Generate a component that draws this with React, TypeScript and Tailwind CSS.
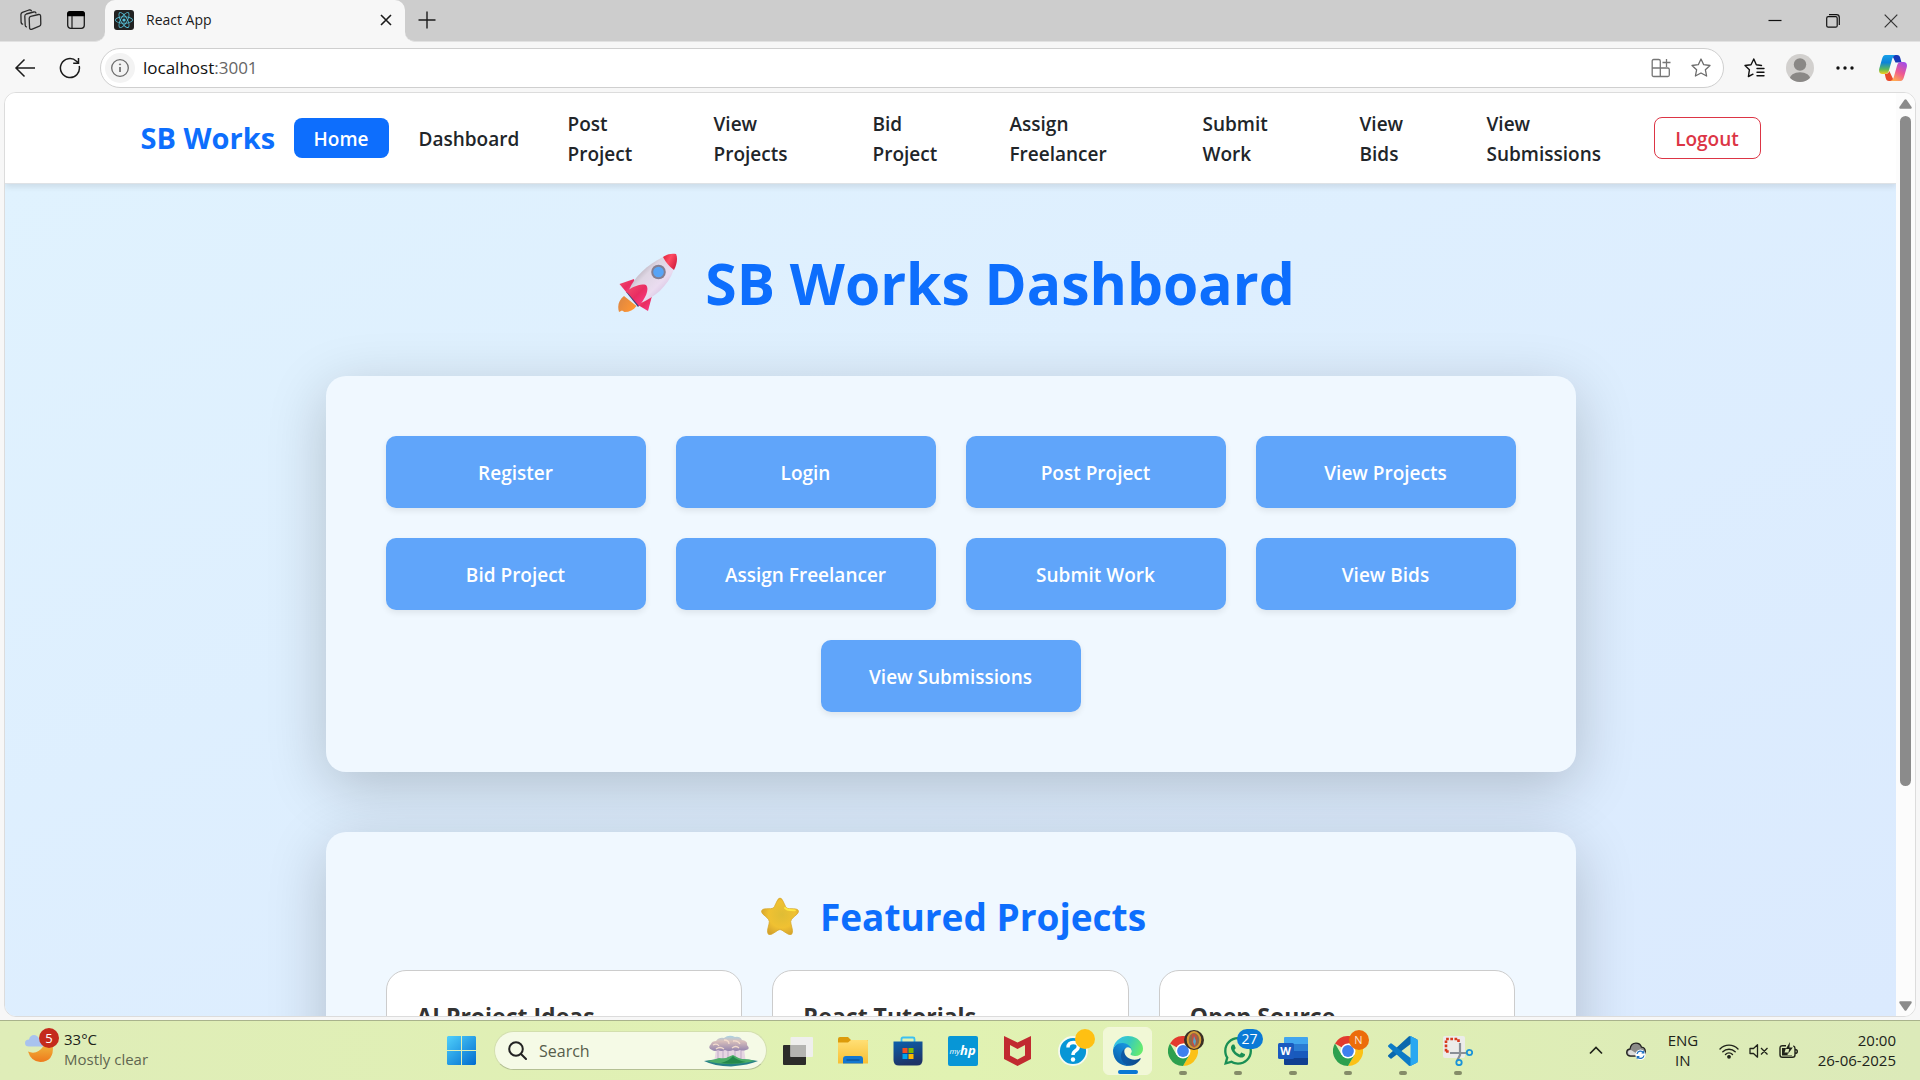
import React from "react";
import type { ReactNode } from "react";
import { FaReact, FaWhatsapp } from "react-icons/fa";

const navItems = [
  { lines: ["Post", "Project"], width: "w-[136px]" },
  { lines: ["View", "Projects"], width: "w-[149px]" },
  { lines: ["Bid", "Project"], width: "w-[127px]" },
  { lines: ["Assign", "Freelancer"], width: "w-[183px]" },
  { lines: ["Submit", "Work"], width: "w-[147px]" },
  { lines: ["View", "Bids"], width: "w-[117px]" },
  { lines: ["View", "Submissions"], width: "w-[167px]" },
];

const actions = [
  "Register",
  "Login",
  "Post Project",
  "View Projects",
  "Bid Project",
  "Assign Freelancer",
  "Submit Work",
  "View Bids",
  "View Submissions",
];

const featured = ["AI Project Ideas", "React Tutorials", "Open Source"];

/* ---------- Browser chrome ---------- */

function WorkspacesIcon() {
  return (
    <svg width="22" height="22" viewBox="0 0 22 22" fill="none" stroke="#2b2b2b" strokeWidth="1.3" strokeLinejoin="round" strokeLinecap="round">
      <path d="M10.7 7.3 18.6 5.5Q20.3 5.2 20.6 6.8L20.8 15Q20.8 16.6 19.4 17.2L11.6 20.3Q10 20.8 9.6 19.2L9.2 9.6Q9.2 7.8 10.7 7.3Z" />
      <path d="M6.4 17.8Q5.3 17.6 5.2 16.2L4.8 7.2Q4.8 5.5 6.3 5L13.6 3Q15.4 2.7 16 4" />
      <path d="M2.6 15.2Q1.2 15 1.1 13.4L.9 5.6Q1 4 2.4 3.4L9 1Q10.7.6 11.4 1.8" />
    </svg>
  );
}

function VerticalTabsIcon() {
  return (
    <svg width="20" height="20" viewBox="0 0 20 20" fill="none">
      <rect x="1.7" y="1.7" width="16.6" height="16.6" rx="3" stroke="#1b1b1b" strokeWidth="1.3" />
      <path d="M1 6.2V4a3 3 0 0 1 3-3h12a3 3 0 0 1 3 3v2.2z" fill="#000" />
      <path d="M6 6v12" stroke="#1b1b1b" strokeWidth="1.2" />
    </svg>
  );
}

function CopilotIcon() {
  return (
    <svg width="28" height="26" viewBox="0 0 28 26">
      <defs>
        <linearGradient id="cpA" x1="0" y1="0" x2="0" y2="1">
          <stop offset="0" stopColor="#18a0e8" />
          <stop offset=".4" stopColor="#0c83d8" />
          <stop offset=".75" stopColor="#5cb85a" />
          <stop offset="1" stopColor="#f5cf1c" />
        </linearGradient>
        <linearGradient id="cpB" x1=".8" y1="0" x2=".3" y2="1">
          <stop offset="0" stopColor="#a24be8" />
          <stop offset=".55" stopColor="#ef5a90" />
          <stop offset="1" stopColor="#ffab52" />
        </linearGradient>
      </defs>
      <path d="M13 0h5c2 0 2.800 1 3.300 3l1.200 4.500h-6z" fill="#1838b8" />
      <path d="M6.500 0h10C14 1 13.500 3 12.900 5L9.800 16c-.8 2.300-2 3-4 3H3.500C.6 19-.5 17 .3 13.500L3 4C3.800 1.200 4.700 0 6.500 0z" fill="url(#cpA)" />
      <path d="M15 26h-5c-2 0-2.800-1-3.300-3L5.800 19c3 0 4-1 4.500-3z" fill="#e84a2c" />
      <path d="M21.500 26h-10c2.500-1 3-3 3.600-5l3.100-11c.8-2.300 2-3 4-3h2.300c2.900 0 4 2 3.200 5.500L25 22c-.8 2.800-1.700 4-3.500 4z" fill="url(#cpB)" />
    </svg>
  );
}

function TabStrip() {
  return (
    <div className="flex h-[42px] shrink-0 items-stretch bg-[#f7f7f7]">
      <div className="flex w-[105px] items-center gap-6 rounded-br-[10px] border-b border-[#e2e2e2] bg-[#cdcdcd] pl-[20px] pb-[2px]">
        <button aria-label="Workspaces"><WorkspacesIcon /></button>
        <button aria-label="Tab actions"><VerticalTabsIcon /></button>
      </div>
      <div className="bg-[#cdcdcd]">
        <div className="flex h-full w-[300px] items-center rounded-t-[10px] bg-[#f7f7f7] pl-[9px] pr-[12px] pb-[2px]">
          <span className="grid size-5 place-items-center rounded-[3px] bg-[#222]">
            <FaReact size={18} color="#58c4dc" />
          </span>
          <span className="ml-3 flex-1 text-[14px] leading-5 text-[#1b1b1b]">React App</span>
          <button aria-label="Close tab">
            <svg width="14" height="14" viewBox="0 0 14 14" stroke="#1b1b1b" strokeWidth="1.600"><path d="M2 2l10 10M12 2 2 12" /></svg>
          </button>
        </div>
      </div>
      <div className="flex flex-1 items-center rounded-bl-[10px] border-b border-[#e2e2e2] bg-[#cdcdcd] pl-3">
        <button aria-label="New tab" className="pb-[2px]">
          <svg width="20" height="20" viewBox="0 0 20 20" stroke="#1b1b1b" strokeWidth="1.400"><path d="M10 1.500v17M1.500 10h17" /></svg>
        </button>
        <div className="ml-auto flex items-center gap-[44px] pr-[22px]">
          <button aria-label="Minimize">
            <svg width="14" height="14" viewBox="0 0 14 14" stroke="#111" strokeWidth="1.200"><path d="M.5 6.500h13" /></svg>
          </button>
          <button aria-label="Restore">
            <svg width="14" height="14" viewBox="0 0 14 14" fill="none" stroke="#111" strokeWidth="1.200">
              <rect x=".7" y="2.700" width="10.500" height="10.500" rx="1.500" />
              <path d="M3 .7h7.500a2.800 2.800 0 0 1 2.800 2.800V11" />
            </svg>
          </button>
          <button aria-label="Close window">
            <svg width="14" height="14" viewBox="0 0 14 14" stroke="#333" strokeWidth="1.200"><path d="M.7.7l12.600 12.600M13.300.7.7 13.300" /></svg>
          </button>
        </div>
      </div>
    </div>
  );
}

function Toolbar() {
  return (
    <div className="flex h-[50px] shrink-0 items-center bg-[#f7f7f7] pl-[14px] pr-[13px] pt-px">
      <button aria-label="Back">
        <svg width="22" height="20" viewBox="0 0 22 20" fill="none" stroke="#1b1b1b" strokeWidth="1.500"><path d="M10.500 1.500 2 10l8.500 8.500M2 10h19" /></svg>
      </button>
      <button aria-label="Reload" className="ml-[23px]">
        <svg width="22" height="22" viewBox="0 0 22 22" fill="none" stroke="#1b1b1b" strokeWidth="1.500"><path d="M20.200 9A9.500 9.500 0 1 1 17.500 4.200L19.500 6M19.500 1v5.300h-5.300" /></svg>
      </button>
      <div className="ml-[19px] flex h-[40px] flex-1 items-center rounded-full border border-[#cfcfcf] bg-white pl-[4px] pr-[12px]">
        <button aria-label="Site information" className="grid size-[30px] shrink-0 place-items-center rounded-full bg-[#f3f3f3]">
          <svg width="18" height="18" viewBox="0 0 18 18" fill="none" stroke="#6b6b6b" strokeWidth="1.300">
            <circle cx="9" cy="9" r="8.300" />
            <path d="M9 8v5" strokeWidth="1.700" />
            <circle cx="9" cy="5.400" r=".6" fill="#6b6b6b" strokeWidth=".8" />
          </svg>
        </button>
        <button aria-label="Address" className="ml-2 flex-1 text-left text-[17px] leading-6 text-[#111]">
          localhost<span className="text-[#666]">:3001</span>
        </button>
        <button aria-label="Install app">
          <svg width="20" height="20" viewBox="0 0 20 20" fill="none" stroke="#767676" strokeWidth="1.300">
            <path d="M9.300 10H1.200V3q0-1.500 1.500-1.500h5q1.600 0 1.600 1.500v15.500H2.700q-1.500 0-1.500-1.500v-7M9.300 10h7.500q1.500 0 1.500 1.500V17q0 1.500-1.500 1.500H9.300M15.500 1v8M11.500 4.500h8" />
          </svg>
        </button>
        <button aria-label="Add to favourites" className="ml-[20px]">
          <svg width="20" height="20" viewBox="0 0 20 20" fill="none" stroke="#6b6b6b" strokeWidth="1.300" strokeLinejoin="round">
            <path d="M10 1l2.700 5.700 6.300.8-4.600 4.300 1.200 6.200L10 15l-5.600 3 1.200-6.200L1 7.500l6.300-.8z" />
          </svg>
        </button>
      </div>
      <button aria-label="Favourites" className="ml-[20px]">
        <svg width="21" height="20" viewBox="0 0 21 20" fill="none" stroke="#111" strokeWidth="1.400" strokeLinejoin="round" strokeLinecap="round">
          <path d="M12.300 6.700 9.800 1 7 6.700 1 7.500l4.400 4.300L4.400 18.500 9 16.200M12.300 6.700 17.500 7.500M13 10.500h7M13 14.200h7M13 17.800h7" />
        </svg>
      </button>
      <button aria-label="Profile" className="ml-[21px]">
        <svg width="28" height="28" viewBox="0 0 28 28">
          <clipPath id="avatar"><circle cx="14" cy="14" r="14" /></clipPath>
          <g clipPath="url(#avatar)">
            <rect width="28" height="28" fill="#d2d0ce" />
            <circle cx="14" cy="10.500" r="6.200" fill="#8a8886" />
            <ellipse cx="14" cy="25" rx="10.500" ry="6.800" fill="#8a8886" />
          </g>
        </svg>
      </button>
      <button aria-label="Settings and more" className="ml-[22px]">
        <svg width="18" height="4" viewBox="0 0 18 4" fill="#111"><circle cx="2" cy="2" r="1.700" /><circle cx="9" cy="2" r="1.700" /><circle cx="16" cy="2" r="1.700" /></svg>
      </button>
      <button aria-label="Copilot" className="ml-[25px]"><CopilotIcon /></button>
    </div>
  );
}

/* ---------- Web page ---------- */

function Navbar() {
  return (
    <nav className="relative z-10 border-b border-[#dee2e6] bg-white shadow-[0_3px_6px_rgba(0,0,0,0.09)]">
      <div className="mx-auto flex min-h-[90px] w-full max-w-[1650px] items-center px-[15px] text-[19px] leading-[30px] text-[#212529]">
        <a href="#brand" className="w-[134px] shrink-0 whitespace-nowrap text-[29px] leading-[44px] font-bold text-[#0d6efd]">SB Works</a>
        <ul className="ml-[19px] flex items-center gap-[10px] font-semibold">
          <li>
            <a href="#home" aria-current="page" className="block w-[95px] rounded-lg bg-[#0d6efd] pt-[6px] pb-[4px] text-center text-white">Home</a>
          </li>
          <li>
            <a href="#dashboard" className="block w-[139px] px-5 pt-[6px] pb-[4px]">Dashboard</a>
          </li>
          {navItems.map((item) => (
            <li key={item.lines.join(" ")} className={item.width}>
              <a href="#section" className="block pt-[6px] pb-[4px] pl-5">
                {item.lines[0]}
                <br />
                {item.lines[1]}
              </a>
            </li>
          ))}
        </ul>
        <button className="ml-auto h-[42px] w-[107px] shrink-0 rounded-lg border border-[#dc3545] pt-px font-semibold text-[#dc3545]">Logout</button>
      </div>
    </nav>
  );
}

function Rocket() {
  return (
    <svg width="60" height="60" viewBox="0 0 60 60" aria-hidden="true">
      <defs>
        <linearGradient id="rkBody" x1=".15" y1=".2" x2=".75" y2=".8">
          <stop offset="0" stopColor="#a9a0ab" />
          <stop offset=".35" stopColor="#ded6e3" />
          <stop offset=".75" stopColor="#eadcf0" />
          <stop offset="1" stopColor="#d9c4e2" />
        </linearGradient>
        <linearGradient id="rkFin" x1="0" y1="0" x2="1" y2="1">
          <stop offset="0" stopColor="#f5506e" />
          <stop offset=".5" stopColor="#e92d62" />
          <stop offset="1" stopColor="#ff3d8c" />
        </linearGradient>
        <linearGradient id="rkFlame" x1="0" y1="0" x2="1" y2=".5">
          <stop offset="0" stopColor="#d98544" />
          <stop offset="1" stopColor="#ff9633" />
        </linearGradient>
        <linearGradient id="rkNose" x1="0" y1="0" x2="1" y2=".6">
          <stop offset="0" stopColor="#dc2038" />
          <stop offset=".5" stopColor="#ff4a62" />
          <stop offset="1" stopColor="#d42040" />
        </linearGradient>
      </defs>
      <path d="M6 43C1 47-1 52 1 59l3-1.500 2.500 1.500c5 0 9-2 12-6z" fill="url(#rkFlame)" />
      <path d="M8 39 20 54l2.500-2.500L11 37z" fill="#42407c" />
      <path d="M16 26 1.500 31 9 40l8-6z" fill="url(#rkFin)" />
      <path d="M34 43l-4 15-10-6 6-8z" fill="url(#rkFin)" />
      <path d="M45 4C29 12 16 24 11 37l12 13c12-5 27-16 33-34z" fill="url(#rkBody)" />
      <path d="M45 4C49 1 54 0 58 1c2 4 1 10-2 16q-7-5-11-13z" fill="url(#rkNose)" />
      <path d="M8 38c6-3 13-8 20-6 4 4-1 14-7 21z" fill="url(#rkFin)" />
      <circle cx="40.500" cy="19" r="7.300" fill="#847f92" />
      <circle cx="40.500" cy="19" r="5.300" fill="#57a4f6" />
    </svg>
  );
}

function Star() {
  return (
    <svg width="40" height="40" viewBox="0 0 40 40" aria-hidden="true">
      <defs>
        <radialGradient id="starFill" cx=".55" cy=".45" r=".6">
          <stop offset="0" stopColor="#dfbd35" />
          <stop offset=".6" stopColor="#f0c132" />
          <stop offset="1" stopColor="#d3a12d" />
        </radialGradient>
      </defs>
      <path d="M20 2.500q2 0 4 5.200 1.800 4.500 3 5 1.500.7 6.500.6 5 0 5 2.700 0 2-4.200 5-3.600 3-3.600 5 0 2 1.200 6 1.500 6-.9 7-2 .8-6-2.300Q21.500 34 20 34t-5 2.700q-4 3.100-6 2.300-2.400-1-.9-7 1.200-4 1.200-6 0-2-3.600-5-4.200-3-4.200-5 0-2.700 5-2.700 5 .1 6.500-.6 1.200-.5 3-5 2-5.200 4-5.200z" transform="translate(0 -1.500)" fill="url(#starFill)" stroke="#d8a82c" strokeWidth=".8" />
      <path d="M25 11q2 2 5 2l5 .3" fill="none" stroke="#ffe742" strokeWidth="1.800" strokeLinecap="round" />
    </svg>
  );
}

function Page() {
  return (
    <div className="flex min-h-0 min-w-0 flex-1 flex-col overflow-hidden">
      <Navbar />
      <main className="min-h-0 flex-1 overflow-hidden bg-gradient-to-br from-[#e0f2fe] to-[#dbeafe]">
        <h1 className="mt-[58px] flex h-[84px] items-start justify-center gap-[27px] pl-[12px] text-[57px] leading-[82px] font-bold text-[#0d6efd]">
          <span className="flex h-[82px] items-center"><Rocket /></span>
          SB Works Dashboard
        </h1>
        <section className="mx-auto mt-[50px] max-w-[1250px] rounded-[20px] bg-[#f0f8ff] p-[60px] shadow-[0_15px_60px_rgba(0,0,0,0.2)]">
          <div className="flex flex-wrap justify-center gap-[30px]">
            {actions.map((label) => (
              <button key={label} className="h-[72px] w-[260px] rounded-[10px] bg-[#60a5fa] pt-[2px] text-[19px] leading-[30px] font-semibold text-white shadow-[0_3px_6px_rgba(0,0,0,0.08)]">
                {label}
              </button>
            ))}
          </div>
        </section>
        <section className="mx-auto mt-[60px] max-w-[1250px] rounded-[20px] bg-[#f0f8ff] px-[60px] pt-[58px] pb-[60px] shadow-[0_15px_60px_rgba(0,0,0,0.2)]">
          <h2 className="mb-[27px] flex items-center justify-center gap-[20px] pl-[5px] text-[37px] leading-[53px] font-bold text-[#0d6efd]">
            <Star />
            Featured Projects
          </h2>
          <div className="grid grid-cols-3 gap-[30px]">
            {featured.map((title) => (
              <article key={title} className="h-[240px] rounded-[20px] border border-[#ccc] bg-white p-[30px]">
                <h3 className="text-[23px] leading-[30px] font-bold text-[#333]">{title}</h3>
              </article>
            ))}
          </div>
        </section>
      </main>
    </div>
  );
}

function Scrollbar() {
  return (
    <div className="flex w-[19px] shrink-0 flex-col items-center bg-[#fcfcfc] pt-[6px] pb-[5px] pr-px">
      <svg width="13" height="10" viewBox="0 0 13 10" fill="#8b8b8b"><path d="M5.500.8q1-1 2 0L12.600 8q.4 1.600-.8 1.800H1.200Q0 9.600.4 8z" /></svg>
      <div className="mt-[7px] h-[670px] w-[11px] rounded-full bg-[#8b8b8b]" />
      <svg className="mt-auto" width="13" height="10" viewBox="0 0 13 10" fill="#8b8b8b"><path d="M5.500 9.200q1 1 2 0L12.600 2q.4-1.600-.8-1.800H1.200Q0 .4.400 2z" /></svg>
    </div>
  );
}

/* ---------- Taskbar ---------- */

function ChromeLogo() {
  return (
    <svg width="30" height="30" viewBox="0 0 30 30">
      <path d="M15 15 2 7.500A15 15 0 0 1 28 7.500H15z" fill="#e33b2e" />
      <path d="M15 7.500h13A15 15 0 0 1 15 30l6.500-11.200z" fill="#fbc116" />
      <path d="M2 7.500A15 15 0 0 0 15 30l6.500-11.250L15 15 8.500 18.750z" fill="#2da04e" />
      <circle cx="15" cy="15" r="7.500" fill="#fff" />
      <circle cx="15" cy="15" r="5.900" fill="#3f80ee" />
    </svg>
  );
}

function TaskbarButton({ label, children, running, active }: { label: string; children: ReactNode; running?: boolean; active?: boolean }) {
  return (
    <button
      aria-label={label}
      className={
        active
          ? "relative grid h-12 w-[49px] mx-[3px] place-items-center rounded-md border border-[#f2f7da] bg-[#f1f8d6]"
          : "relative grid h-12 w-[49px] mx-[3px] place-items-center"
      }
    >
      {children}
      {running && <span className="absolute bottom-0 left-1/2 h-1 w-2 -translate-x-1/2 rounded-full bg-[#858c68]" />}
      {active && <span className="absolute bottom-0 left-1/2 h-1 w-5 -translate-x-1/2 rounded-full bg-[#0a78d4]" />}
    </button>
  );
}

function SearchBox() {
  return (
    <label className="ml-[18px] mr-[3px] flex h-[39px] w-[273px] items-center rounded-full border border-[#d3dfae] border-b-[#b4c094] bg-[#f5fae6] pl-[13px] pr-[8px]">
      <svg width="19" height="19" viewBox="0 0 19 19" fill="none" stroke="#222" strokeWidth="2"><circle cx="8" cy="8" r="6.800" /><path d="M13 13l5 5" strokeLinecap="round" /></svg>
      <input aria-label="Search" placeholder="Search" className="ml-3 w-[140px] bg-transparent text-[16px] leading-6 outline-none placeholder:text-[#575d4b]" />
      <svg className="ml-auto" width="54" height="32" viewBox="0 0 54 32" aria-hidden="true">
        <defs>
          <linearGradient id="cloudTop" x1="0" y1="0" x2="0" y2="1"><stop offset="0" stopColor="#a8d2e4" /><stop offset=".35" stopColor="#d9c0bb" /><stop offset="1" stopColor="#9384ae" /></linearGradient>
        </defs>
        <path d="M12 14h28l2 14H10z" fill="#e6d6e2" />
        <path d="M14 14v12M19 15v12M24 15v13M31 14v13M37 14v12" stroke="#c6b2cc" strokeWidth="1.200" />
        <path d="M8 15q-5-2-1-6 1-3 5-3 3-4 8-3 5-4 11-1 5-1 7 3 6 1 5 5 4 4-1 5-3 1-6 0-4 2-7 0-4 2-8 0-4 2-7 0-3 2-6 0z" fill="url(#cloudTop)" />
        <path d="M9 10q4-2 6 1m5-6q5 0 5 4m4-3q5-1 7 3M12 14q4-3 8 0m8-1q4-3 7 0" fill="none" stroke="#f3dccd" strokeWidth="1.300" />
        <path d="M0 26q15-3 27-1 14-2 27 1-9 4-27 5.500Q10 31 0 26z" fill="#267f88" />
        <path d="M3 26q7-1 12-3 7 1 9-1l5-2q5 3 9 4 7 0 13 2-12 3-24 3-15 0-24-3z" fill="#4cae68" />
        <path d="M17 28q8-2 12-7 3 4 13 6-12 3-25 1z" fill="#24884c" />
      </svg>
    </label>
  );
}

function TaskbarApps() {
  return (
    <div className="flex items-center">
      <button aria-label="Start">
        <svg width="29" height="29" viewBox="0 0 29 29">
          <defs><linearGradient id="win" gradientUnits="userSpaceOnUse" x1="0" y1="0" x2="26" y2="29"><stop offset="0" stopColor="#50d0fb" /><stop offset="1" stopColor="#0471d1" /></linearGradient></defs>
          <path d="M1 0h13v14H0V1zM15 0h13l1 1v13H15zM0 15h14v14H1l-1-1zM15 15h14v13l-1 1H15z" fill="url(#win)" />
        </svg>
      </button>
      <SearchBox />
      <TaskbarButton label="Task view">
        <svg width="30" height="28" viewBox="0 0 30 28">
          <rect x="0" y="8" width="23" height="20" rx="1" fill="#2c2c2a" />
          <rect x="7.500" y="0" width="22.500" height="20" rx="1" fill="#efefed" />
          <path d="M7.500 8H23v12H7.500z" fill="#b4b4b1" />
        </svg>
      </TaskbarButton>
      <TaskbarButton label="File Explorer">
        <svg width="30" height="27" viewBox="0 0 30 27">
          <defs><linearGradient id="fold" x1="0" y1="0" x2="0" y2="1"><stop offset="0" stopColor="#ffdf75" /><stop offset="1" stopColor="#f8bf33" /></linearGradient></defs>
          <path d="M0 2q0-2 2-2h8l3 3h16q1 0 1 1v6H0z" fill="#dc9b0b" />
          <path d="M0 5.500h10l3-2.500h16q1 0 1 1v22.500H0z" fill="url(#fold)" />
          <path d="M5 26.500V22q0-3 3-3h14q3 0 3 3v4.500z" fill="#1377d0" />
          <path d="M8.500 23h13" stroke="#0a4f96" strokeWidth="1.300" />
        </svg>
      </TaskbarButton>
      <TaskbarButton label="Microsoft Store">
        <svg width="30" height="30" viewBox="0 0 30 30">
          <defs><linearGradient id="bag" x1="0" y1="0" x2=".3" y2="1"><stop offset="0" stopColor="#0c60ac" /><stop offset="1" stopColor="#1e3468" /></linearGradient></defs>
          <path d="M8.500 6V3q0-1.500 1.500-1.500h10q1.500 0 1.500 1.500v3" fill="none" stroke="#3cc0f2" strokeWidth="1.800" />
          <path d="M.5 5.500h29V24q0 5.500-5.500 5.500H6Q.5 29.500.5 24z" fill="url(#bag)" />
          <path d="M9.500 12h5v5h-5z" fill="#f25022" /><path d="M15.500 12h5v5h-5z" fill="#7fba00" /><path d="M9.500 18h5v5h-5z" fill="#00a4ef" /><path d="M15.500 18h5v5h-5z" fill="#ffb900" />
        </svg>
      </TaskbarButton>
      <TaskbarButton label="myHP">
        <span className="flex size-[30px] items-center justify-center rounded-xs bg-[#0796d6] text-[8px] leading-none text-white italic">
          my<b className="text-[13px]">hp</b>
        </span>
      </TaskbarButton>
      <TaskbarButton label="McAfee">
        <svg width="27" height="30" viewBox="0 0 27 30"><path d="M0 0 13.500 6.500 27 0v23L13.500 30 0 23zM6 9v10.500l7.500 4 7.500-4V9l-7.500 4z" fill="#c12a30" fillRule="evenodd" /></svg>
      </TaskbarButton>
      <TaskbarButton label="HP Support">
        <span className="relative">
          <svg width="30" height="30" viewBox="0 0 30 30"><circle cx="15" cy="15" r="14" fill="#0796d6" stroke="#f6faf0" strokeWidth="1.800" /><path d="M10 11.500Q10 6.500 15.300 6.500q5 0 5 4 0 2.500-2.800 4.200Q15 16.300 15 19" fill="none" stroke="#fff" strokeWidth="3.400" /><circle cx="15" cy="23.500" r="2.200" fill="#fff" /></svg>
          <span className="absolute -top-[7px] -right-[7px] size-5 rounded-full bg-[#ffc012]" />
        </span>
      </TaskbarButton>
      <TaskbarButton label="Microsoft Edge" active>
        <svg width="30" height="30" viewBox="0 0 256 256">
          <defs>
            <linearGradient id="eg1" x1=".3" y1=".5" x2="1" y2=".6"><stop offset="0" stopColor="#0c59a4" /><stop offset="1" stopColor="#114a8b" /></linearGradient>
            <linearGradient id="eg2" x1=".8" y1="0" x2=".2" y2="1"><stop offset="0" stopColor="#1b9de2" /><stop offset=".4" stopColor="#1383d0" /><stop offset="1" stopColor="#085aa6" /></linearGradient>
            <linearGradient id="eg3" x1="0" y1=".2" x2="1" y2=".5"><stop offset="0" stopColor="#35c1f1" /><stop offset=".5" stopColor="#36c9c0" /><stop offset="1" stopColor="#66eb6e" /></linearGradient>
          </defs>
          <path fill="url(#eg1)" d="M231 190.500c-3.400 1.800-6.900 3.400-10.500 4.700a101.900 101.900 0 0 1-35.900 6.500c-47.300 0-88.500-32.500-88.500-74.300a31.500 31.500 0 0 1 16.400-27.300c-42.800 1.800-53.800 46.400-53.800 72.500 0 74 68.100 81.400 82.800 81.400 7.900 0 19.800-2.300 27-4.600l1.300-.4a128.300 128.300 0 0 0 66.600-52.800 4 4 0 0 0-5.400-5.700z" />
          <path fill="url(#eg2)" d="M105.700 241.400a79.200 79.200 0 0 1-22.700-21.300 80.700 80.700 0 0 1 29.500-120c3.200-1.500 8.500-4.100 15.600-4a32.400 32.400 0 0 1 25.700 13 31.900 31.900 0 0 1 6.300 18.700c0-.2 24.500-79.600-80-79.600-43.900 0-80 41.700-80 78.200a130.200 130.200 0 0 0 12.100 56 128 128 0 0 0 156.400 67 75.500 75.500 0 0 1-62.800-8z" />
          <path fill="url(#eg3)" d="M152.300 148.900c-.9 1-3.400 2.500-3.400 5.600 0 2.600 1.700 5.200 4.800 7.300 14.300 10 41.400 8.600 41.500 8.600a59.600 59.600 0 0 0 30.300-8.300 61.400 61.400 0 0 0 30.400-52.900c.3-22.400-8-37.300-11.300-43.900C223.500 23.900 177.700 0 128 0A128 128 0 0 0 0 126.200c.5-36.500 36.800-66 80-66 3.500 0 23.500.3 42 10.100a72.600 72.600 0 0 1 30.900 29.300c6.100 10.600 7.200 24.100 7.200 29.500s-2.700 13.300-7.800 19.900z" />
        </svg>
      </TaskbarButton>
      <TaskbarButton label="Chrome" running>
        <span className="relative">
          <ChromeLogo />
          <svg className="absolute -top-[6px] -right-[6px]" width="20" height="20" viewBox="0 0 20 20">
            <circle cx="10" cy="10" r="10" fill="#3a2f26" />
            <ellipse cx="10" cy="10" rx="6.300" ry="8" fill="#8d6a48" stroke="#d59a35" strokeWidth="2" />
            <path d="M8 4q3-1 5 3l-1 8-2 3-2-4z" fill="#c0503f" />
            <path d="M10 6l2 5-1 5-2-4z" fill="#58a5c8" />
          </svg>
        </span>
      </TaskbarButton>
      <TaskbarButton label="WhatsApp" running>
        <span className="relative">
          <FaWhatsapp size={32} color="#1a8f55" />
          <span className="absolute -top-[6px] -right-[9px] h-5 w-[26px] rounded-full bg-[#0b7ad6] text-center text-[14px] leading-5 text-white">27</span>
        </span>
      </TaskbarButton>
      <TaskbarButton label="Word" running>
        <span className="relative">
          <svg width="30" height="28" viewBox="0 0 30 28">
            <path d="M6 1q0-1 1-1h22q1 0 1 1v6H6z" fill="#41a5ee" /><path d="M6 7h24v7H6z" fill="#2b7cd3" /><path d="M6 14h24v7H6z" fill="#185abd" /><path d="M6 21h24v6q0 1-1 1H7q-1 0-1-1z" fill="#103f91" />
            <rect x="0" y="6" width="16" height="16" rx="1.500" fill="#1a5abf" />
          </svg>
          <span className="absolute top-[6px] left-0 w-4 text-center text-[11px] leading-4 font-bold text-white">W</span>
        </span>
      </TaskbarButton>
      <TaskbarButton label="Chrome, profile N" running>
        <span className="relative">
          <ChromeLogo />
          <span className="absolute -top-[6px] -right-[6px] size-5 rounded-full bg-[#ec6c0a] text-center text-[11px] leading-5 text-[#fbe3d0]">N</span>
        </span>
      </TaskbarButton>
      <TaskbarButton label="Visual Studio Code" running>
        <svg width="30" height="30" viewBox="0 0 100 100">
          <path d="M96 11 76 1a6 6 0 0 0-7 1L1.500 63.500a4 4 0 0 0 0 6l5.500 5a4 4 0 0 0 5 .2L93 13.500q5-3 7 3.500 0-4-4-6z" fill="#0a68ad" />
          <path d="M96 89 76 99a6 6 0 0 1-7-1L1.500 36.500a4 4 0 0 1 0-6L7 25.500a4 4 0 0 1 5-.2l81 61.200q5 3 7-3.500 0 4-4 6z" fill="#0d7bc6" />
          <path d="M76 99a6 6 0 0 1-7-1c2.500 2.500 6 .5 6-2.500v-91c0-3-3.500-5-6-2.500a6 6 0 0 1 7-1l20 10a6 6 0 0 1 4 6v66a6 6 0 0 1-4 6z" fill="#29a8f1" />
        </svg>
      </TaskbarButton>
      <TaskbarButton label="Snipping Tool" running>
        <svg width="30" height="30" viewBox="0 0 30 30">
          <rect x="0" y="0" width="22" height="22" rx="2" fill="#ececea" />
          <path d="M3 15.500V3h12.500v3M3 15.500h4" fill="none" stroke="#d8391d" strokeWidth="2.600" strokeDasharray="2.700 1.500" />
          <path d="M17 7v12l-3 6M7 17h16" fill="none" stroke="#8a8f96" strokeWidth="2.200" />
          <circle cx="26.500" cy="16.500" r="2.700" fill="none" stroke="#1b93d8" strokeWidth="1.800" />
          <circle cx="16" cy="26.500" r="2.700" fill="none" stroke="#1b93d8" strokeWidth="1.800" />
        </svg>
      </TaskbarButton>
    </div>
  );
}

function Tray() {
  return (
    <div className="flex items-center justify-end text-[15px] leading-5 text-[#20231a]">
      <button aria-label="Show hidden icons">
        <svg width="14" height="9" viewBox="0 0 14 9" fill="none" stroke="#20231a" strokeWidth="1.700"><path d="M1 7.500 7 1.500l6 6" /></svg>
      </button>
      <button aria-label="OneDrive" className="ml-[23px]">
        <svg width="20" height="18" viewBox="0 0 20 18">
          <path d="M4 14Q.7 13.500.7 10.500T4 7Q5 1.200 10 1.200q4.200 0 5.500 4 3.800.3 3.800 4.300T16 14z" fill="#8b8b88" stroke="#222" strokeWidth="1.300" />
          <path d="M4.500 13.300Q2 12.500 2 10.500q0-2.500 3-2.500 5 3 8 5.300z" fill="#dcdcda" />
          <circle cx="14.500" cy="12.800" r="5.200" fill="#fff" />
          <path d="M11 12a3.600 3.600 0 0 1 6.500-1.300M18 13.500a3.600 3.600 0 0 1-6.500 1.400M17.800 8.800v2.200h-2.200M11.200 16.800v-2.100h2.200" fill="none" stroke="#1a6fc0" strokeWidth="1.200" />
        </svg>
      </button>
      <button className="ml-[22px] w-[30px] pb-[2px] text-center">ENG<br />IN</button>
      <button aria-label="Network, volume and battery" className="ml-[21px] flex items-center gap-[10px]">
        <svg width="20" height="16" viewBox="0 0 20 16" fill="none" stroke="#20231a" strokeWidth="1.400" strokeLinecap="round">
          <path d="M1 6a12.500 12.500 0 0 1 18 0M3.800 8.800a8.700 8.700 0 0 1 12.400 0M6.500 11.500a5 5 0 0 1 7 0" /><circle cx="10" cy="13.800" r="1.200" fill="#20231a" />
        </svg>
        <svg width="20" height="16" viewBox="0 0 20 16" fill="none" stroke="#20231a" strokeWidth="1.300" strokeLinejoin="round">
          <path d="M1 5.500h3.500L8.500 1.800v12.400L4.500 10.500H1zM12 5l6.500 6.500M18.500 5 12 11.500" />
        </svg>
        <svg width="19" height="17" viewBox="0 0 19 17">
          <path d="M7 3.700H3.500Q1 3.700 1 6.200v6.500q0 2.600 2.500 2.600h10q2.500 0 2.500-2.600V6.500q0-2-1.700-2.600M16 7.500q2.300 0 2.300 2t-2.300 2" fill="none" stroke="#20231a" strokeWidth="1.400" />
          <path d="M3 6h4l-1.500 4.500H9L8.500 13h4.500v.5H3z" fill="#20231a" />
          <path d="M11 0 6.800 7h3.400L9 12l4.800-6.500h-3.400z" fill="#20231a" />
        </svg>
      </button>
      <button className="ml-5 pb-[2px] text-right">20:00<br />26-06-2025</button>
    </div>
  );
}

function Taskbar() {
  return (
    <footer className="grid h-[60px] shrink-0 grid-cols-[447px_auto_1fr] items-center border-t border-[#a9b38c] bg-gradient-to-r from-[#dfedb8] via-[#e1f2b2] to-[#dceab9] pr-6">
      <button className="flex items-center self-start pt-[7px] pl-[25px] text-left text-[15px] leading-5">
        <span className="relative block h-9 w-[34px] self-start">
          <svg className="mt-[5px]" width="30" height="30" viewBox="0 0 30 30">
            <defs><linearGradient id="moon" x1="0" y1="0" x2="0" y2="1"><stop offset="0" stopColor="#f0b23a" /><stop offset="1" stopColor="#ee7a1c" /></linearGradient></defs>
            <path d="M3 18.500q9 4 16-6l8.800 0q1.500 16-12.500 16.500Q6 28.500 3 18.500z" fill="url(#moon)" />
            <path d="M4 13.500q-4 0-4-3.500t4-3.500q1-4.500 5-4.500 3.500 0 5 3.500 4 1 4 8z" fill="#a9c3ee" />
          </svg>
          <span className="absolute top-0 left-[14px] size-5 rounded-full bg-[#c42b1c] text-center text-[13px] leading-5 text-white">5</span>
        </span>
        <span className="ml-[5px] block pt-px">
          <span className="block text-[#20231a]">33°C</span>
          <span className="block text-[#5f6650]">Mostly clear</span>
        </span>
      </button>
      <TaskbarApps />
      <Tray />
    </footer>
  );
}

export default function App() {
  return (
    <div className="flex h-screen flex-col bg-[#f7f7f7] font-['Open_Sans','Noto_Sans',sans-serif]">
      <TabStrip />
      <Toolbar />
      <div className="mx-[4px] mb-[3px] flex min-h-0 flex-1 overflow-hidden rounded-[12px] border border-[#dcdcdc] bg-white">
        <Page />
        <Scrollbar />
      </div>
      <Taskbar />
    </div>
  );
}
